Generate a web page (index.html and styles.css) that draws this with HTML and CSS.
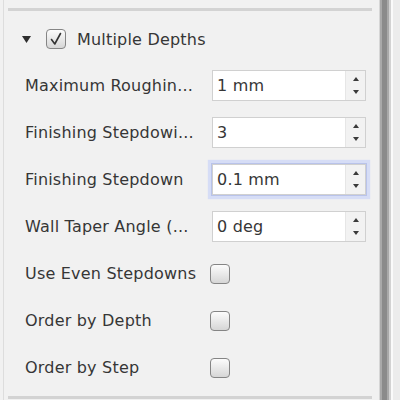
FILE: index.html
```html
<!DOCTYPE html>
<html>
<head>
<meta charset="utf-8">
<link rel="stylesheet" href="styles.css">
</head>
<body>
<div class="panel">
  <div class="sep"></div>
  <div class="header">
    <svg class="disclosure" width="9" height="7" viewBox="0 0 9 7"><polygon points="0,0 9,0 4.5,7" fill="#2e2e2e"/></svg>
    <span class="check checked">
      <svg width="18" height="18" viewBox="0 0 18 18"><path d="M4.5 9.5 L7.8 14 L13.5 3.5" fill="none" stroke="#333" stroke-width="1.6" stroke-linecap="round" stroke-linejoin="round"/></svg>
    </span>
    <span class="title">Multiple Depths</span>
  </div>
  <div class="row">
    <span class="label">Maximum Roughin...</span>
    <div class="field"><span class="value">1 mm</span><span class="stepper"><i class="up"></i><i class="down"></i></span></div>
  </div>
  <div class="row">
    <span class="label">Finishing Stepdowi...</span>
    <div class="field"><span class="value">3</span><span class="stepper"><i class="up"></i><i class="down"></i></span></div>
  </div>
  <div class="row">
    <span class="label">Finishing Stepdown</span>
    <div class="field focused"><span class="value">0.1 mm</span><span class="stepper"><i class="up"></i><i class="down"></i></span></div>
  </div>
  <div class="row">
    <span class="label">Wall Taper Angle (...</span>
    <div class="field"><span class="value">0 deg</span><span class="stepper"><i class="up"></i><i class="down"></i></span></div>
  </div>
  <div class="row">
    <span class="label">Use Even Stepdowns</span>
    <span class="check box"></span>
  </div>
  <div class="row">
    <span class="label">Order by Depth</span>
    <span class="check box"></span>
  </div>
  <div class="row">
    <span class="label">Order by Step</span>
    <span class="check box"></span>
  </div>
  <div class="sep bottom"></div>
</div>
<div class="divider"></div>
</body>
</html>
```

FILE: styles.css
```css
html, body {
  margin: 0;
  padding: 0;
}
body {
  width: 400px;
  height: 400px;
  overflow: hidden;
  display: flex;
  background: #f1f1f1;
  font-family: "DejaVu Sans", sans-serif;
  font-size: 16px;
  color: #363636;
}
.panel {
  width: 375px;
  margin-left: 3px;
  border-left: 1px solid #dddddd;
  display: flex;
  flex-direction: column;
}
.sep {
  height: 3px;
  margin: 8px 6px 0 4px;
  background: #d3d3d3;
  flex: none;
}
.sep.bottom {
  margin-top: 5px;
}
.header {
  height: 46px;
  margin-top: 5px;
  display: flex;
  align-items: center;
  flex: none;
}
.disclosure {
  margin-left: 18px;
  margin-right: 15px;
}
.check {
  width: 18px;
  height: 18px;
  border: 1.5px solid #858585;
  border-radius: 4px;
  background: linear-gradient(#fcfcfc, #d6d6d6);
  display: inline-flex;
  align-items: center;
  justify-content: center;
  box-sizing: content-box;
  flex: none;
}
.title {
  margin-left: 11px;
  letter-spacing: 0.2px;
}
.row {
  height: 47px;
  display: flex;
  align-items: center;
  flex: none;
}
.label {
  width: 208px;
  padding-left: 21px;
  box-sizing: border-box;
  white-space: nowrap;
  overflow: hidden;
  letter-spacing: 0.2px;
  flex: none;
}
.row .box {
  margin-left: -2px;
}
.field {
  width: 152px;
  height: 29px;
  border: 1px solid #d0d0d0;
  display: flex;
  flex: none;
}
.field.focused {
  box-shadow: 0 0 0 1px #b9c3ea, 0 0 1px 4px #d6ddf6;
}
.value {
  flex: 1;
  background: #ffffff;
  padding-left: 4px;
  line-height: 29px;
  letter-spacing: 0.2px;
}
.stepper {
  width: 20px;
  background: #f2f2f2;
  border-left: 1px solid #e6e6e6;
  display: flex;
  flex-direction: column;
  justify-content: space-between;
  align-items: center;
  padding: 6px 0;
  box-sizing: border-box;
}
.stepper i {
  display: block;
  width: 0;
  height: 0;
  border-left: 3px solid transparent;
  border-right: 3px solid transparent;
}
.stepper .up {
  border-bottom: 4px solid #3a3a3a;
}
.stepper .down {
  border-top: 4px solid #3a3a3a;
}
.divider {
  width: 22px;
  height: 400px;
  background: linear-gradient(to right,
    #f1f1f1 0px, #f1f1f1 1px,
    #d6d6d6 1px, #d6d6d6 2px,
    #a9a9a9 2px, #a9a9a9 4px,
    #8b8b8b 4px, #8b8b8b 9px,
    #a9a9a9 9px, #a9a9a9 11px,
    #d2d2d2 11px, #d2d2d2 13px,
    #fafafa 13px, #fafafa 15px,
    #ececec 15px, #ececec 22px);
  flex: none;
}
```
